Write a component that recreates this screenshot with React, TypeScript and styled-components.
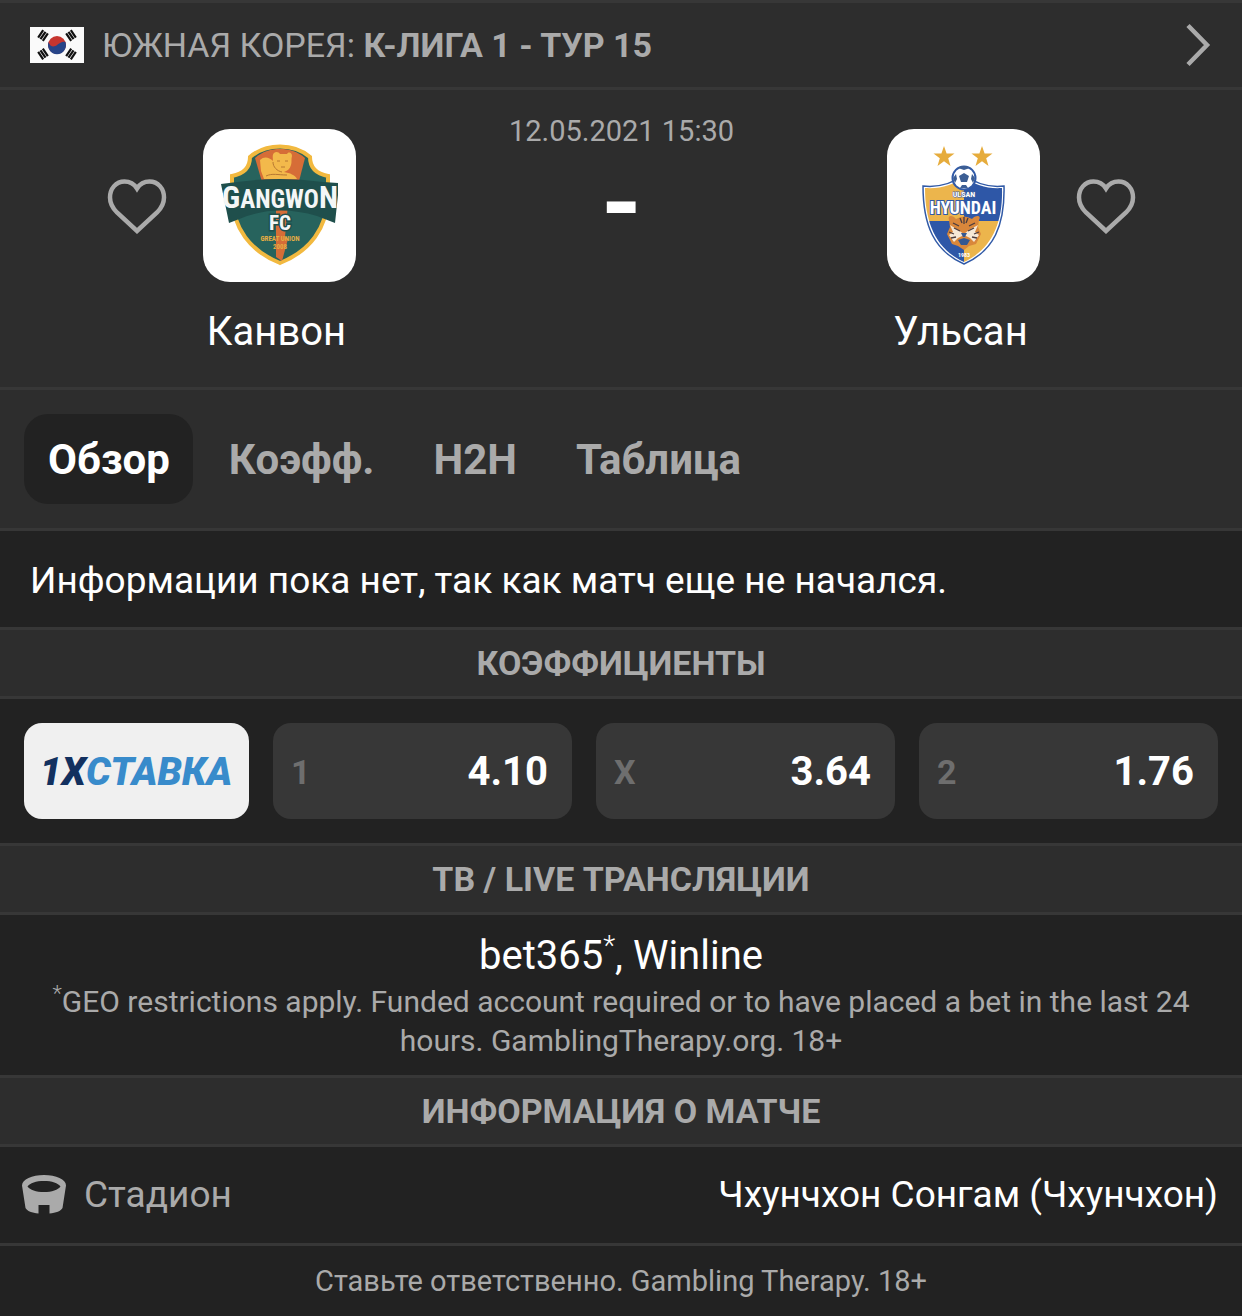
import React from "react";
import styled, { createGlobalStyle } from "styled-components";

const color = {
  page: "#222222",
  panel: "#2d2d2d",
  line: "#373737",
  text: "#ffffff",
  muted: "#aaaaaa",
  dim: "#6e6e6e",
};

const GlobalStyle = createGlobalStyle`
  *, *::before, *::after { box-sizing: border-box; }
  body {
    margin: 0;
    background: ${color.page};
    color: ${color.text};
    font-family: Roboto, "Liberation Sans", sans-serif;
  }
  button { font: inherit; border: 0; padding: 0; background: none; cursor: pointer; }
  h1, h2, p, dl, dt, dd { margin: 0; }
`;

const Page = styled.main`
  display: flex;
  flex-direction: column;
`;

const LeagueBar = styled.a`
  display: flex;
  align-items: center;
  gap: 18px;
  height: 90px;
  padding: 0 30px;
  border-top: 3px solid ${color.line};
  border-bottom: 3px solid ${color.line};
  background: ${color.panel};
  color: ${color.muted};
  font-size: 34px;
  line-height: 40px;
  text-decoration: none;
`;

const LeagueName = styled.span`
  flex: 1;
`;

const Match = styled.section`
  display: flex;
  justify-content: space-between;
  padding: 39px 106px 31px 107px;
  border-bottom: 3px solid ${color.line};
  background: ${color.panel};
`;

const Team = styled.div<{ $side: "home" | "away" }>`
  display: grid;
  grid-template-columns: ${(p) => (p.$side === "home" ? "60px 153px" : "153px 60px")};
  grid-template-areas: ${(p) =>
    p.$side === "home" ? `"fav crest" ". name"` : `"crest fav" "name ."`};
  column-gap: 36px;
  row-gap: 26px;
  align-items: center;
`;

const Favourite = styled.button`
  grid-area: fav;
  display: flex;
  color: ${color.muted};
`;

const Crest = styled.div`
  grid-area: crest;
  display: flex;
  width: 153px;
  height: 153px;
  border-radius: 27px;
  background: #ffffff;
`;

const TeamName = styled.h2`
  grid-area: name;
  justify-self: center;
  padding-right: 6px;
  font-size: 40px;
  font-weight: 400;
  line-height: 48px;
  white-space: nowrap;
`;

const Centre = styled.div`
  display: flex;
  flex-direction: column;
  align-items: center;
  margin-top: -17px;
`;

const Kickoff = styled.time`
  color: ${color.muted};
  font-size: 29px;
  line-height: 38px;
`;

const Score = styled.div`
  font-size: 104px;
  font-weight: 700;
  line-height: 108px;
`;

const Tabs = styled.nav`
  display: flex;
  gap: 12px;
  padding: 24px;
  border-bottom: 3px solid ${color.line};
  background: ${color.panel};
`;

const Tab = styled.button<{ $active?: boolean }>`
  height: 90px;
  padding: 2px 23px 0 24px;
  border-radius: 24px;
  background: ${(p) => (p.$active ? color.page : "transparent")};
  color: ${(p) => (p.$active ? color.text : color.muted)};
  font-size: 42px;
  font-weight: 700;
  line-height: 48px;
`;

const Notice = styled.p`
  padding: 26px 30px 22px;
  font-size: 37px;
  line-height: 48px;
`;

const SectionTitle = styled.h2`
  padding: 13px 24px;
  border-top: 3px solid ${color.line};
  border-bottom: 3px solid ${color.line};
  background: ${color.panel};
  color: ${color.muted};
  font-size: 34px;
  font-weight: 700;
  line-height: 40px;
  text-align: center;
`;

const OddsRow = styled.div`
  display: flex;
  gap: 24px;
  padding: 24px;
`;

const Bookmaker = styled.a`
  display: flex;
  align-items: center;
  justify-content: center;
  width: 225px;
  height: 96px;
  border-radius: 18px;
  background: #f0f0f0;
`;

const Odd = styled.button`
  display: flex;
  flex: 1;
  align-items: center;
  justify-content: space-between;
  height: 96px;
  padding: 2px 24px 0 18px;
  border-radius: 18px;
  background: ${color.line};
`;

const OddLabel = styled.span`
  color: ${color.dim};
  font-size: 34px;
  font-weight: 700;
  line-height: 40px;
`;

const OddValue = styled.span`
  color: ${color.text};
  font-size: 40px;
  font-weight: 700;
  line-height: 48px;
`;

const Broadcast = styled.div`
  padding: 15px 24px;
  text-align: center;
`;

const Channels = styled.p`
  font-size: 40px;
  line-height: 52px;
`;

const Star = styled.sup`
  font-size: 28px;
  font-weight: 300;
  line-height: 0;
`;

const Restrictions = styled.p`
  color: ${color.muted};
  font-size: 30px;
  line-height: 39px;
`;

const SmallStar = styled.sup`
  font-size: 22px;
  font-weight: 300;
  line-height: 0;
`;

const InfoRow = styled.dl`
  display: flex;
  align-items: center;
  justify-content: space-between;
  padding: 24px 24px 24px 22px;
  border-bottom: 3px solid ${color.line};
  font-size: 37px;
  line-height: 48px;
`;

const InfoLabel = styled.dt`
  display: flex;
  align-items: center;
  gap: 18px;
  color: ${color.muted};
`;

const Footer = styled.footer`
  padding: 16px 24px;
  color: ${color.muted};
  font-size: 29px;
  line-height: 38px;
  text-align: center;
`;

const Trigram = ({ x, y, angle }: { x: number; y: number; angle: number }) => (
  <g transform={`translate(${x} ${y}) rotate(${angle})`} stroke="#111" strokeWidth="2.200">
    <path d="M-4.500 -2.800H4.500M-4.500 0H4.500M-4.500 2.800H4.500" />
  </g>
);

const Flag = () => (
  <svg width="54" height="36" viewBox="0 0 54 36" aria-hidden="true">
    <rect width="54" height="36" fill="#fafafa" />
    <circle cx="27" cy="18" r="9" fill="#c6352f" />
    <path d="M18.600 15A9 9 0 1 0 35.400 15C33 14 30 15.500 27 18C24 20.500 20 20 18.600 15Z" fill="#274488" />
    <Trigram x={13} y={8.5} angle={-56} />
    <Trigram x={41} y={8.5} angle={56} />
    <Trigram x={13} y={27} angle={56} />
    <Trigram x={41} y={27} angle={-56} />
  </svg>
);

const Chevron = () => (
  <svg width="26" height="44" viewBox="0 0 26 44" fill="none" aria-hidden="true">
    <path d="M2 2.500L21 22L2 41.500" stroke="currentColor" strokeWidth="4.500" />
  </svg>
);

const Heart = () => (
  <svg width="60" height="56" viewBox="0 0 60 56" fill="none" aria-hidden="true">
    <path
      d="M30 10.500C26.500 5 22 3.500 17.500 3.500C9 3.500 3 10.500 3 19.500C3 26.500 6 30.500 10 34.500L30 53L50 34.500C54 30.500 57 26.500 57 19.500C57 10.500 51 3.500 42.500 3.500C38 3.500 33.500 5 30 10.500Z"
      stroke="currentColor"
      strokeWidth="4.500"
    />
  </svg>
);

const Stadium = () => (
  <svg width="44" height="40" viewBox="0 0 44 40" aria-hidden="true">
    <path
      fill="currentColor"
      fillRule="evenodd"
      d="M22 0C10 0 0 4.500 0 10.500L3.500 33C5 36 10 38 16.500 38.500V30H27.500V38.500C34 38 39 36 40.500 33L44 10.500C44 4.500 34 0 22 0ZM22 6C30 6 36 8 38.500 11.500C36 15 30 17 22 17C14 17 8 15 5.500 11.500C8 8 14 6 22 6Z"
    />
  </svg>
);

const crestFont = `"Roboto Condensed", "Liberation Sans Narrow", "Open Sans Condensed", "DejaVu Sans Condensed", sans-serif`;

const GangwonCrest = () => (
  <svg width="153" height="153" viewBox="0 0 153 153" role="img" aria-label="Gangwon FC">
    <path
      d="M77 17.500C91 17.500 100 22 107 28C107 39 114 45 125 47V68C124 99 107 122 77 134C47 122 30 99 29 68V47C40 45 47 39 47 28C54 22 63 17.500 77 17.500Z"
      fill="#27635d"
      stroke="#f2b93f"
      strokeWidth="4"
    />
    <path d="M52 29C60 22 68 20 77 20C86 20 94 22 102 29L94 60H61Z" fill="#d66d37" />
    <path
      d="M57 31C61 27 66 28 70 32C70 29 69 26 71 24C73 22 76 23 77 25H84C86 22 89 24 89 27C88 30 89 33 88 36C87 40 84 42 81 43C87 44 92 46 94 50H61L58 42Z"
      fill="#f3b94b"
    />
    <path d="M74 32H77M82 32H85M78 38H82M70 33C70 38 74 42 79 43M63 47C69 44 75 46 84 46" fill="none" stroke="#b77832" strokeWidth="1" />
    <path d="M73 75H85L82 108L85 110L79 132L73 128Z" fill="#d66d37" />
    <path d="M18 55L34 53Q77 47 120 53L135 54V66L132 94L114 87Q77 76 44 87L26 94Z" fill="#1f4f4c" />
    <g fill="#f4f6f6" fontFamily={crestFont} fontWeight="700" textAnchor="middle">
      <text x="77" y="79">
        <tspan fontSize="31">G</tspan>
        <tspan fontSize="25">ANGWO</tspan>
        <tspan fontSize="31">N</tspan>
      </text>
      <text x="77" y="101" fontSize="21" stroke="#1f4f4c" strokeWidth="3" paintOrder="stroke">FC</text>
    </g>
    <g fill="#e5ad43" fontFamily={crestFont} fontSize="7" fontWeight="700" textAnchor="middle">
      <text x="77" y="112">GREAT UNION</text>
      <text x="77" y="120">2008</text>
    </g>
  </svg>
);

const starPath = "M0 -11L2.600 -3.500H10.500L4.200 1.300L6.500 9L0 4.300L-6.500 9L-4.200 1.300L-10.500 -3.500H-2.600Z";

const UlsanCrest = () => (
  <svg width="153" height="153" viewBox="0 0 153 153" role="img" aria-label="Ulsan Hyundai">
    <defs>
      <clipPath id="ulsan-shield">
        <path d="M38 59C54 60 66 56 77 48C88 56 100 60 115 59C116 94 105 120 77 133C49 120 38 94 38 59Z" />
      </clipPath>
    </defs>
    <path d={starPath} transform="translate(57 28)" fill="#e6ac3c" />
    <path d={starPath} transform="translate(95 28)" fill="#e6ac3c" />
    <path
      d="M36 57C54 59 66 54 77 46C88 54 100 59 117 57C118 96 107 122 77 135C47 122 36 96 36 57Z"
      fill="#ffffff"
      stroke="#315aa7"
      strokeWidth="1.500"
    />
    <g clipPath="url(#ulsan-shield)">
      <rect x="36" y="45" width="41" height="47" fill="#ecb54c" />
      <rect x="77" y="45" width="41" height="47" fill="#2e57a7" />
      <rect x="36" y="92" width="41" height="44" fill="#2e57a7" />
      <rect x="77" y="92" width="41" height="44" fill="#ecb54c" />
    </g>
    <circle cx="77" cy="49" r="11.500" fill="#ffffff" stroke="#315aa7" strokeWidth="2" />
    <path
      d="M77 44L82 47L80 53H74L72 47ZM71 39L77 41L83 39L80 37H74ZM66 49L69 45L70 50L68 54ZM88 49L85 45L84 50L86 54ZM73 59L75 56H79L81 59Z"
      fill="#3c5e94"
    />
    <g fill="#ffffff" fontFamily={crestFont} fontWeight="700" textAnchor="middle">
      <text x="77" y="68" fontSize="8" stroke="#45659e" strokeWidth="1" paintOrder="stroke">ULSAN</text>
      <text x="76" y="85" fontSize="18" stroke="#315aa7" strokeWidth="2" paintOrder="stroke">HYUNDAI</text>
      <text x="77" y="128" fontSize="6">1983</text>
    </g>
    <path
      d="M62 91C60 86 66 86 69 90Q77 85 85 90C88 86 95 86 92 91L91 98L94 105L89 115L82 117L77 121L71 117L65 115L60 105L63 98Z"
      fill="#d9873b"
    />
    <path
      d="M63 96L66 103L62 106L67 113L71 109L77 106L83 109L87 113L92 106L88 103L91 96L82 101L77 105L71 101Z"
      fill="#f5e8d6"
    />
    <path
      d="M77 88V95M73 89L75 94M81 89L79 94M66 94L72 97M88 94L82 97M67 99L73 102M87 99L81 102M62 103L67 105M92 103L87 105M64 109L69 108M90 109L85 108"
      stroke="#493c40"
      strokeWidth="1.300"
    />
    <path d="M74 104H80L78 108H76ZM71 111L77 109L83 111L80 116H74Z" fill="#355891" />
  </svg>
);

const StavkaLogo = () => (
  <svg width="200" height="48" viewBox="0 0 200 48" role="img" aria-label="1xСтавка">
    <text
      x="99"
      y="38"
      textAnchor="middle"
      fontFamily="Roboto, sans-serif"
      fontSize="39"
      fontStyle="italic"
      fontWeight="900"
    >
      <tspan fill="#12305f">1X</tspan>
      <tspan fill="#388bcb">СТАВКА</tspan>
    </text>
  </svg>
);

const odds = [
  { label: "1", value: "4.10" },
  { label: "X", value: "3.64" },
  { label: "2", value: "1.76" },
];

const tabs = ["Обзор", "Коэфф.", "H2H", "Таблица"];

export default function App() {
  const [active, setActive] = React.useState(tabs[0]);
  return (
    <>
      <GlobalStyle />
      <Page>
        <LeagueBar href="#league">
          <Flag />
          <LeagueName>
            ЮЖНАЯ КОРЕЯ: <b>К-ЛИГА 1 - ТУР 15</b>
          </LeagueName>
          <Chevron />
        </LeagueBar>

        <Match>
          <Team $side="home">
            <Favourite aria-label="Добавить Канвон в избранное">
              <Heart />
            </Favourite>
            <Crest>
              <GangwonCrest />
            </Crest>
            <TeamName>Канвон</TeamName>
          </Team>
          <Centre>
            <Kickoff dateTime="2021-05-12T15:30">12.05.2021 15:30</Kickoff>
            <Score>-</Score>
          </Centre>
          <Team $side="away">
            <Crest>
              <UlsanCrest />
            </Crest>
            <Favourite aria-label="Добавить Ульсан в избранное">
              <Heart />
            </Favourite>
            <TeamName>Ульсан</TeamName>
          </Team>
        </Match>

        <Tabs>
          {tabs.map((name) => (
            <Tab key={name} $active={name === active} onClick={() => setActive(name)}>
              {name}
            </Tab>
          ))}
        </Tabs>

        <Notice>Информации пока нет, так как матч еще не начался.</Notice>

        <SectionTitle>КОЭФФИЦИЕНТЫ</SectionTitle>
        <OddsRow>
          <Bookmaker href="#bookmaker">
            <StavkaLogo />
          </Bookmaker>
          {odds.map((odd) => (
            <Odd key={odd.label}>
              <OddLabel>{odd.label}</OddLabel>
              <OddValue>{odd.value}</OddValue>
            </Odd>
          ))}
        </OddsRow>

        <SectionTitle>ТВ / LIVE ТРАНСЛЯЦИИ</SectionTitle>
        <Broadcast>
          <Channels>
            bet365<Star>*</Star>, Winline
          </Channels>
          <Restrictions>
            <SmallStar>*</SmallStar>GEO restrictions apply. Funded account required or to have placed a bet in the
            last 24 hours. GamblingTherapy.org. 18+
          </Restrictions>
        </Broadcast>

        <SectionTitle>ИНФОРМАЦИЯ О МАТЧЕ</SectionTitle>
        <InfoRow>
          <InfoLabel>
            <Stadium />
            Стадион
          </InfoLabel>
          <dd>Чхунчхон Сонгам (Чхунчхон)</dd>
        </InfoRow>

        <Footer>Ставьте ответственно. Gambling Therapy. 18+</Footer>
      </Page>
    </>
  );
}
